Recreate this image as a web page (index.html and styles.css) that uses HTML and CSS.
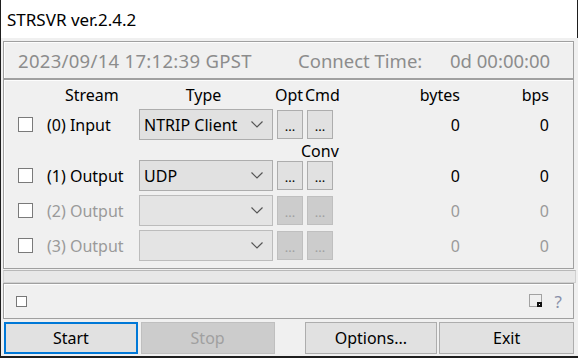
FILE: index.html
```html
<!DOCTYPE html>
<html lang="en">

<head>
    <meta charset="UTF-8">
    <title>STRSVR ver.2.4.2</title>
    <link rel="stylesheet" href="styles.css">
</head>

<body>
    <div id="window">
        <div class="titlebar">STRSVR ver.2.4.2</div>
        <div class="client">
            <div class="panel time-panel">
                <span class="time">2023/09/14 17:12:39 GPST</span>
                <span class="conn-label">Connect Time:</span>
                <span class="conn-value">0d 00:00:00</span>
            </div>

            <div class="panel stream-panel">
                <div class="row head">
                    <span></span>
                    <span class="head-stream">Stream</span>
                    <span class="head-type">Type</span>
                    <span class="head-opt">Opt</span>
                    <span class="head-cmd">Cmd</span>
                    <span class="num">bytes</span>
                    <span class="num">bps</span>
                </div>

                <div class="row">
                    <span class="check"></span>
                    <span class="label">(0) Input</span>
                    <div class="combo"><span>NTRIP Client</span><svg class="chev" width="12" height="7" viewBox="0 0 12 7"><polyline points="0.5,0.5 6,6 11.5,0.5" /></svg></div>
                    <span class="dots">...</span>
                    <span class="dots">...</span>
                    <span class="num">0</span>
                    <span class="num">0</span>
                </div>

                <div class="row conv-row">
                    <span class="conv">Conv</span>
                </div>

                <div class="row">
                    <span class="check"></span>
                    <span class="label">(1) Output</span>
                    <div class="combo"><span>UDP</span><svg class="chev" width="12" height="7" viewBox="0 0 12 7"><polyline points="0.5,0.5 6,6 11.5,0.5" /></svg></div>
                    <span class="dots">...</span>
                    <span class="dots">...</span>
                    <span class="num">0</span>
                    <span class="num">0</span>
                </div>

                <div class="row">
                    <span class="check"></span>
                    <span class="label off">(2) Output</span>
                    <div class="combo off"><span></span><svg class="chev" width="12" height="7" viewBox="0 0 12 7"><polyline points="0.5,0.5 6,6 11.5,0.5" /></svg></div>
                    <span class="dots off">...</span>
                    <span class="dots off">...</span>
                    <span class="num off">0</span>
                    <span class="num off">0</span>
                </div>

                <div class="row">
                    <span class="check"></span>
                    <span class="label off">(3) Output</span>
                    <div class="combo off"><span></span><svg class="chev" width="12" height="7" viewBox="0 0 12 7"><polyline points="0.5,0.5 6,6 11.5,0.5" /></svg></div>
                    <span class="dots off">...</span>
                    <span class="dots off">...</span>
                    <span class="num off">0</span>
                    <span class="num off">0</span>
                </div>
            </div>

            <div class="strip"></div>

            <div class="panel status-panel">
                <span class="mini-check"></span>
                <svg class="trace-icon" width="14" height="14" viewBox="0 0 14 14">
                    <rect x="0.5" y="0.5" width="12" height="12" fill="none" stroke="#555" stroke-dasharray="1 1" />
                    <rect x="8" y="8" width="5" height="5" fill="#111" />
                    <rect x="10" y="10" width="1" height="1" fill="#fff" />
                </svg>
                <span class="help">?</span>
            </div>

            <div class="buttons">
                <button class="btn start">Start</button>
                <button class="btn stop" disabled>Stop</button>
                <button class="btn options">Options...</button>
                <button class="btn exit">Exit</button>
            </div>
        </div>
    </div>
</body>

</html>
```

FILE: styles.css
```css
html,
body {
    margin: 0;
    padding: 0;
    background-color: #f0f0f0;
}

body {
    font-family: "Noto Sans", sans-serif;
    font-size: 16px;
    color: #000;
}

#window {
    width: 578px;
    height: 358px;
    box-sizing: border-box;
    border-left: 1px solid #1e1e1e;
    border-bottom: 2px solid #1e1e1e;
    overflow: hidden;
}

.titlebar {
    height: 38px;
    background-color: #fff;
    border-right: 1px solid #1e1e1e;
    padding-left: 6px;
    font-size: 17px;
    line-height: 40px;
}

.client {
    padding: 3px 4px 0 2px;
}

.panel {
    box-sizing: border-box;
    border: 1px solid #a0a0a0;
    box-shadow: inset 1px 1px 0 #fdfdfd;
}

.time-panel {
    height: 38px;
    display: flex;
    align-items: center;
    padding-left: 14px;
    font-size: 18.5px;
    color: #8c8c8c;
}

.time {
    width: 280px;
    letter-spacing: 0.3px;
}

.conn-label {
    width: 152px;
}

.stream-panel {
    height: 190px;
    padding: 0 0 0 14px;
    display: flex;
    flex-direction: column;
    gap: 4px;
}

.row {
    display: grid;
    grid-template-columns: 29px 92px 134px 30px 30px 127px 89px;
    height: 31px;
    align-items: center;
}

.row.head {
    height: 25px;
    align-items: end;
    line-height: 20px;
}

.row.conv-row {
    height: 12px;
}

.head-stream {
    padding-left: 18px;
}

.head-type {
    justify-self: center;
    margin-right: 5px;
}

.head-opt {
    padding-left: 2px;
}

.head-cmd {
    padding-left: 2px;
}

.num {
    text-align: right;
}

.off {
    color: #9a9a9a;
}

.check {
    width: 15px;
    height: 15px;
    box-sizing: border-box;
    border: 1px solid #7a7a7a;
    background-color: #fff;
}

.combo {
    height: 31px;
    box-sizing: border-box;
    border: 1px solid #adadad;
    background-color: #e1e1e1;
    display: flex;
    align-items: center;
    padding: 0 9px 0 4px;
}

.combo.off {
    background-color: #e4e4e4;
    border-color: #bcbcbc;
}

.chev {
    margin-left: auto;
    fill: none;
    stroke: #555;
    stroke-width: 1.2;
}

.dots {
    justify-self: end;
    width: 26px;
    height: 29px;
    box-sizing: border-box;
    border: 1px solid #adadad;
    background-color: #e1e1e1;
    font-size: 13px;
    line-height: 30px;
    text-align: center;
}

.dots.off {
    background-color: #cccccc;
    border-color: #bfbfbf;
    color: #a0a0a0;
}

.conv {
    grid-column: 5 / span 2;
    margin-left: -2px;
    line-height: 14px;
}

.strip {
    height: 13px;
    margin: 1px -2px 0 0;
    box-sizing: border-box;
    border: 1px solid #d0d0d0;
    border-top-color: #b8b8b8;
    background-color: #e8e8e8;
}

.status-panel {
    height: 36px;
    display: flex;
    align-items: center;
    padding: 0 0 0 12px;
}

.mini-check {
    width: 11px;
    height: 11px;
    box-sizing: border-box;
    border: 1px solid #777;
    background-color: #fff;
}

.trace-icon {
    margin-left: auto;
}

.help {
    margin: 0 11px 0 12px;
    color: #8990aa;
    font-size: 17px;
}

.buttons {
    display: flex;
    margin-top: 3px;
}

.btn {
    height: 32px;
    box-sizing: border-box;
    border: 1px solid #adadad;
    background-color: #e1e1e1;
    font-family: "Noto Sans", sans-serif;
    font-size: 16px;
    color: #000;
    padding: 0;
}

.start {
    width: 134px;
    margin-left: 1px;
    border: 2px solid #0078d7;
}

.stop {
    width: 134px;
    margin-left: 3px;
    background-color: #cccccc;
    border-color: #bfbfbf;
    color: #a0a0a0;
}

.options {
    width: 133px;
    margin-left: 30px;
}

.exit {
    width: 135px;
    margin-left: 2px;
}
```
